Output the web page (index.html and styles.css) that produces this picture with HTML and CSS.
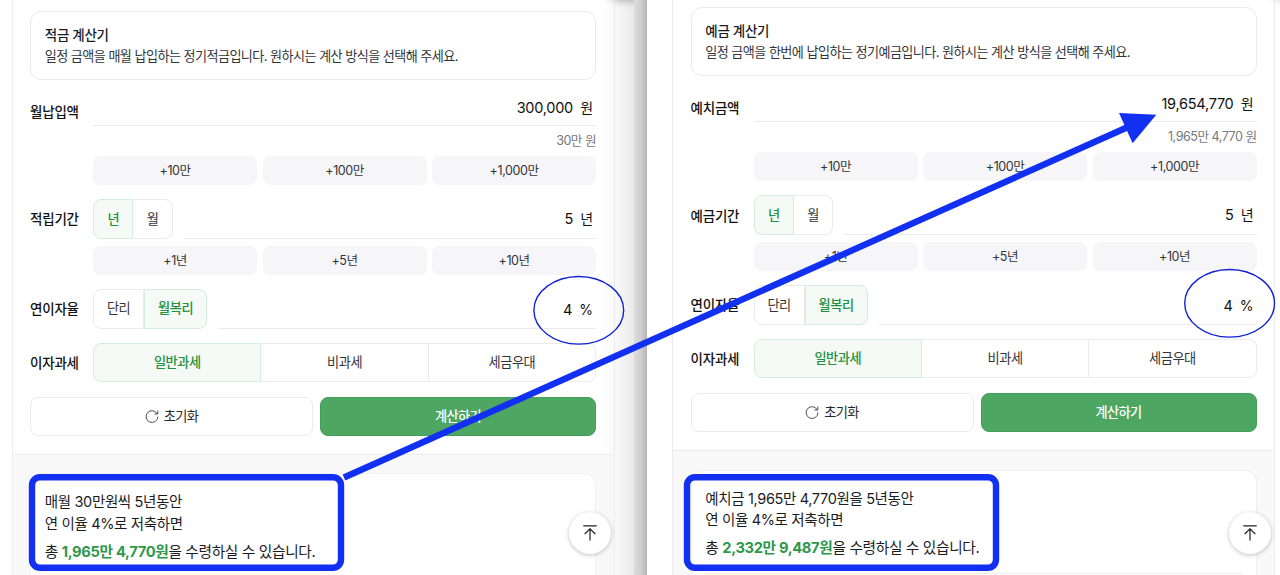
FILE: index.html
```html
<!DOCTYPE html>
<html lang="ko">
<head>
<meta charset="utf-8">
<title>적금 · 예금 계산기</title>
<link rel="stylesheet" href="styles.css">
</head>
<body>
<main class="stage">
  <section class="window window-left">
    <div class="panel">
      <div class="form">
        <div class="intro">
          <h2 class="intro-title">적금 계산기</h2>
          <p class="intro-text">일정 금액을 매월 납입하는 정기적금입니다. 원하시는 계산 방식을 선택해 주세요.</p>
        </div>
        <div class="row row-amount">
          <span class="label">월납입액</span>
          <div class="field"><span class="value">300,000</span><span class="unit">원</span></div>
        </div>
        <p class="helper">30만 원</p>
        <div class="chips"><span class="chip">+10만</span><span class="chip">+100만</span><span class="chip">+1,000만</span></div>
        <div class="row row-term">
          <span class="label">적립기간</span>
          <div class="toggle toggle-term"><span class="option on">년</span><span class="option">월</span></div>
          <div class="field"><span class="value">5</span><span class="unit">년</span></div>
        </div>
        <div class="chips chips-term"><span class="chip">+1년</span><span class="chip">+5년</span><span class="chip">+10년</span></div>
        <div class="row row-rate">
          <span class="label">연이자율</span>
          <div class="toggle toggle-rate"><span class="option">단리</span><span class="option on">월복리</span></div>
          <div class="field"><span class="value">4</span><span class="unit">%</span></div>
        </div>
        <div class="row row-tax">
          <span class="label">이자과세</span>
          <div class="toggle toggle-tax"><span class="option on">일반과세</span><span class="option">비과세</span><span class="option">세금우대</span></div>
        </div>
        <div class="actions">
          <button class="btn reset"><svg class="reset-icon" viewBox="0 0 14 14"><path d="M12.3 5A5.9 5.9 0 1 0 12.9 7.6M12.8 1.5V5H9.4"/></svg>초기화</button>
          <button class="btn submit">계산하기</button>
        </div>
      </div>
      <div class="result-area">
        <div class="result">
          <p class="line">매월 30만원씩 5년동안</p>
          <p class="line">연 이율 4%로 저축하면</p>
          <p class="line total">총 <strong>1,965만 4,770원</strong>을 수령하실 수 있습니다.</p>
          <hr class="rule">
        </div>
      </div>
    </div>
    <span class="header-shadow"></span>
    <button class="to-top"><svg viewBox="0 0 16 18"><path d="M1.3 1.9H14.7M8 16.5V5M2.7 10 8 4.8 13.3 10"/></svg></button>
  </section>
  <div class="gutter"></div>
  <section class="window window-right">
    <div class="panel">
      <div class="form">
        <div class="intro">
          <h2 class="intro-title">예금 계산기</h2>
          <p class="intro-text">일정 금액을 한번에 납입하는 정기예금입니다. 원하시는 계산 방식을 선택해 주세요.</p>
        </div>
        <div class="row row-amount">
          <span class="label">예치금액</span>
          <div class="field"><span class="value">19,654,770</span><span class="unit">원</span></div>
        </div>
        <p class="helper">1,965만 4,770 원</p>
        <div class="chips"><span class="chip">+10만</span><span class="chip">+100만</span><span class="chip">+1,000만</span></div>
        <div class="row row-term">
          <span class="label">예금기간</span>
          <div class="toggle toggle-term"><span class="option on">년</span><span class="option">월</span></div>
          <div class="field"><span class="value">5</span><span class="unit">년</span></div>
        </div>
        <div class="chips chips-term"><span class="chip">+1년</span><span class="chip">+5년</span><span class="chip">+10년</span></div>
        <div class="row row-rate">
          <span class="label">연이자율</span>
          <div class="toggle toggle-rate"><span class="option">단리</span><span class="option on">월복리</span></div>
          <div class="field"><span class="value">4</span><span class="unit">%</span></div>
        </div>
        <div class="row row-tax">
          <span class="label">이자과세</span>
          <div class="toggle toggle-tax"><span class="option on">일반과세</span><span class="option">비과세</span><span class="option">세금우대</span></div>
        </div>
        <div class="actions">
          <button class="btn reset"><svg class="reset-icon" viewBox="0 0 14 14"><path d="M12.3 5A5.9 5.9 0 1 0 12.9 7.6M12.8 1.5V5H9.4"/></svg>초기화</button>
          <button class="btn submit">계산하기</button>
        </div>
      </div>
      <div class="result-area">
        <div class="result">
          <p class="line">예치금 1,965만 4,770원을 5년동안</p>
          <p class="line">연 이율 4%로 저축하면</p>
          <p class="line total">총 <strong>2,332만 9,487원</strong>을 수령하실 수 있습니다.</p>
          <hr class="rule">
        </div>
      </div>
    </div>
    <span class="header-shadow"></span>
    <button class="to-top"><svg viewBox="0 0 16 18"><path d="M1.3 1.9H14.7M8 16.5V5M2.7 10 8 4.8 13.3 10"/></svg></button>
  </section>
  <svg class="annotations" viewBox="0 0 1280 575">
    <rect class="frame" x="32" y="477.2" width="309" height="90.6" rx="8"/>
    <rect class="frame" x="687" y="477.2" width="309" height="90.6" rx="8"/>
    <ellipse class="circle" cx="578.8" cy="310.3" rx="44.9" ry="33.8"/>
    <ellipse class="circle" cx="1229.6" cy="303.3" rx="44.9" ry="33.8"/>
    <path class="shaft" d="M344 477.5 1128 127"/>
    <path class="head" d="M1119 113 1156.3 114.7 1132.6 143.3Z"/>
  </svg>
</main>
</body>
</html>
```

FILE: styles.css
```css
* { box-sizing: border-box; }
body {
  margin: 0;
  background: #fff;
  color: #1b1c1f;
  font-family: Inter, "Noto Sans CJK KR", sans-serif;
}
h2, p { margin: 0; font-weight: 400; }
button { font: inherit; padding: 0; margin: 0; }

.stage {
  position: relative;
  display: flex;
  width: 1280px;
  height: 575px;
  overflow: hidden;
}
.window { position: relative; height: 575px; overflow: hidden; }
.window-left {
  width: 634px;
  padding-left: 11.6px;
  background: linear-gradient(90deg, #fff 600px, #f9f9f9 616px, #e9e9e9 634px);
}
.gutter { width: 13px; background: linear-gradient(90deg, #dcdcdc, #cfcfcf 50%, #b4b4b4); }
.window-right { width: 633px; padding-left: 25.1px; }

.panel {
  width: 603px;
  height: 600px;
  border: 1px solid #ececee;
  border-width: 0 1px;
}
.form { height: 454px; padding: 11px 17.5px 0; }
.window-right .form { height: 450.4px; padding-top: 7.4px; }

.intro {
  height: 69px;
  padding: 12.5px 13.7px 0;
  border: 1px solid #ebebed;
  border-radius: 11px;
}
.intro-title { font-size: 13.5px; line-height: 20px; font-weight: 500; letter-spacing: -0.3px; }
.intro-text { margin-top: 1.5px; font-size: 13.1px; line-height: 20px; letter-spacing: -0.57px; color: #333438; white-space: nowrap; }

.row { display: flex; }
.row-amount { height: 30px; margin-top: 16px; }
.row-term { height: 40px; margin-top: 14px; }
.row-rate { height: 39.5px; margin-top: 14.5px; }
.row-tax { height: 39px; margin-top: 14.5px; }
.label {
  width: 63px;
  flex: none;
  align-self: center;
  padding-bottom: 1.5px;
  font-size: 13.5px;
  font-weight: 500;
  letter-spacing: -0.25px;
  color: #111;
}
.row-amount .label { padding-bottom: 0; }
.field {
  flex: 1;
  display: flex;
  justify-content: flex-end;
  align-items: center;
  padding: 1px 3px 0 0;
  border-bottom: 1px solid #ebebed;
  font-size: 14.5px;
  line-height: 20px;
  color: #111;
}
.row-amount .field { padding: 0 3px 5.5px 0; }
.row-rate .field { padding-top: 2.5px; }
.toggle + .field { margin-left: 11px; }
.value { letter-spacing: -0.25px; }
.unit { margin-left: 7.2px; font-size: 14px; }
.helper { height: 30px; text-align: right; font-size: 12.6px; line-height: 29px; letter-spacing: -0.5px; color: #77787c; }

.chips { display: grid; grid-template-columns: repeat(3, 1fr); gap: 5.5px; margin-left: 63px; height: 29px; }
.chips-term { margin-top: 7px; height: 28.5px; }
.chip {
  display: flex;
  align-items: center;
  justify-content: center;
  padding-bottom: 2px;
  border-radius: 7px;
  background: #f6f6f8;
  font-size: 12.5px;
  letter-spacing: -0.4px;
  color: #333438;
}

.toggle { display: flex; flex: none; }
.toggle-term { width: 79.5px; }
.toggle-rate { width: 114px; }
.toggle-tax { flex: 1; }
.option {
  flex: 1;
  display: flex;
  align-items: center;
  justify-content: center;
  padding-bottom: 2px;
  border: 1px solid #ebebed;
  font-size: 13.2px;
  letter-spacing: -0.45px;
  color: #333438;
}
.option + .option { border-left: 0; }
.option:first-child { border-radius: 8px 0 0 8px; }
.option:last-child { border-radius: 0 8px 8px 0; }
.option.on { border-color: #d3eedd; background: #f5faf7; color: #1f9140; font-weight: 500; }
.toggle-rate .option { flex: 0 0 51px; }
.toggle-rate .on { flex: 1; border-left: 1px solid #d3eedd; }

.actions { display: grid; grid-template-columns: 283px 1fr; gap: 7px; height: 39.5px; margin-top: 14.5px; }
.btn {
  display: flex;
  align-items: center;
  justify-content: center;
  padding-bottom: 1.5px;
  border-radius: 8px;
  font-size: 13.2px;
  font-weight: 500;
  letter-spacing: -0.6px;
}
.reset { gap: 5px; border: 1px solid #ebebed; background: #fff; color: #27282b; font-weight: 400; }
.reset-icon { width: 14px; height: 14px; fill: none; stroke: #505155; stroke-width: 1; }
.submit { border: 1px solid #43a05a; background: #4da662; color: #fff; }

.result-area {
  height: 150px;
  padding: 18.2px 17.5px 0;
  border-top: 1px solid #ededef;
  background: rgba(246, 246, 247, .65);
}
.result {
  height: 140px;
  padding: 17px 13.7px 0;
  border: 1px solid #f1f1f2;
  border-radius: 11px;
  background: #fff;
}
.line { font-size: 14.5px; line-height: 21.5px; letter-spacing: -0.35px; white-space: nowrap; }
.total { margin-top: 7.6px; font-size: 14.7px; letter-spacing: -0.34px; }
.total strong { color: #2e974b; font-weight: 700; }
.rule { height: 1px; margin: 13.4px 0 0; border: 0; background: #eeeef0; }

.header-shadow {
  position: absolute;
  top: -30px;
  left: 610px;
  width: 60px;
  height: 30px;
  border-radius: 8px;
  box-shadow: 0 0 9px rgba(0, 0, 0, .35);
}
.window-right .header-shadow { left: 625px; box-shadow: 0 0 10px rgba(0, 0, 0, .2); }
.to-top {
  position: absolute;
  top: 512px;
  left: 569px;
  display: grid;
  place-items: center;
  width: 42px;
  height: 42px;
  border: 0;
  border-radius: 50%;
  background: #fff;
  box-shadow: 0 1px 4px rgba(0, 0, 0, .25);
}
.window-right .to-top { left: 582px; }
.to-top svg { width: 16px; height: 18px; fill: none; stroke: #222; stroke-width: 1.2; }

.annotations { position: absolute; inset: 0; width: 1280px; height: 575px; pointer-events: none; }
.frame { fill: none; stroke: #1230f2; stroke-width: 6.4; }
.circle { fill: none; stroke: #0d20d8; stroke-width: 1.4; }
.shaft { fill: none; stroke: #1230f2; stroke-width: 6.4; }
.head { fill: #1230f2; }
```
